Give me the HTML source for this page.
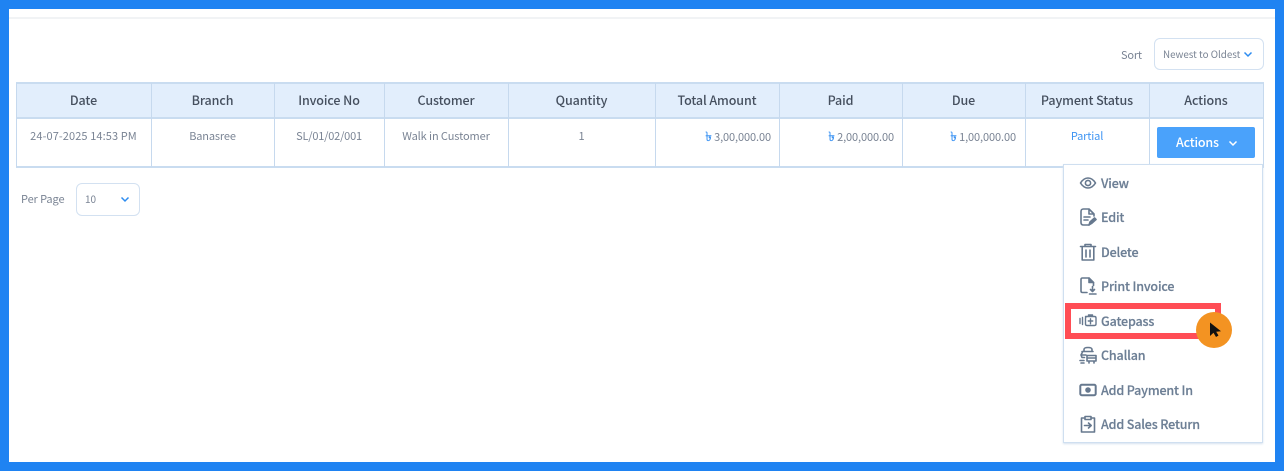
<!DOCTYPE html>
<html><head><meta charset="utf-8">
<style>
html,body{margin:0;padding:0;background:#fff}
body{width:1284px;height:471px;position:relative;overflow:hidden;font-family:"Noto Sans CJK KR","Liberation Sans",sans-serif;}
#w{position:absolute;left:0;top:0;width:1284px;height:471px;filter:blur(.3px)}
.a{position:absolute;white-space:nowrap}
.frame{position:absolute;left:0;top:0;width:1284px;height:471px;box-sizing:border-box;border:solid #1f83f2;border-width:9px 9px 9px 9px;z-index:20;pointer-events:none}
.h{position:absolute;top:82px;height:35px;line-height:36px;text-align:center;font-size:12.5px;letter-spacing:-.1px;font-weight:500;color:#454f5e}
.c{position:absolute;top:129px;line-height:14px;text-align:center;font-size:11px;letter-spacing:-.15px;color:#7a8494}
.r{text-align:right;letter-spacing:-.1px}
.v{position:absolute;width:1px;top:83px;height:84px;background:#c6d9ee}
.t{color:#3f95f3;font-size:13px;font-weight:500;line-height:14px;-webkit-text-stroke:.3px #3f95f3}
.mi{position:absolute;left:1101px;font-size:12.5px;letter-spacing:-.15px;font-weight:500;color:#6d7f95;line-height:18px;white-space:nowrap;-webkit-text-stroke:.2px #6d7f95}
.ic{position:absolute;left:1079px;width:18px;height:18px;fill:none;stroke:#66788e;stroke-width:1.6;stroke-linejoin:round;stroke-linecap:round}
</style></head><body>
<div class="frame"></div>
<div id="w">
<div class="a" style="left:9px;top:17px;width:1266px;height:2px;background:#f1f3f5"></div>

<div class="a" style="left:1121px;top:47px;font-size:11px;letter-spacing:-.2px;line-height:16px;color:#7a8494">Sort</div>
<div class="a" style="left:1154px;top:38px;width:110px;height:32px;box-sizing:border-box;border:1px solid #d3e1f1;border-radius:6px"></div>
<div class="a" style="left:1163px;top:47px;font-size:9.8px;line-height:14px;color:#7a8494">Newest to Oldest</div>
<svg class="a" style="left:1243px;top:51px" width="10" height="7"><path d="M1.5 1.5L5 5L8.5 1.5" fill="none" stroke="#2d8cf0" stroke-width="1.5"/></svg>

<div class="a" style="left:16px;top:83px;width:1248px;height:35px;background:#e2eefc"></div>
<div class="a" style="left:16px;top:82px;width:1248px;height:2px;background:#c9dcf0"></div>
<div class="a" style="left:16px;top:117px;width:1248px;height:2px;background:#c9dcf0"></div>
<div class="a" style="left:16px;top:166px;width:1248px;height:2px;background:#c9dcf0"></div>
<div class="v" style="left:16px"></div><div class="v" style="left:151px"></div><div class="v" style="left:274px"></div><div class="v" style="left:384px"></div><div class="v" style="left:508px"></div><div class="v" style="left:655px"></div><div class="v" style="left:779px"></div><div class="v" style="left:902px"></div><div class="v" style="left:1025px"></div><div class="v" style="left:1149px"></div><div class="v" style="left:1263px"></div>

<div class="h" style="left:16px;width:135px">Date</div>
<div class="h" style="left:151px;width:123px">Branch</div>
<div class="h" style="left:274px;width:110px">Invoice No</div>
<div class="h" style="left:384px;width:124px">Customer</div>
<div class="h" style="left:508px;width:147px">Quantity</div>
<div class="h" style="left:655px;width:124px">Total Amount</div>
<div class="h" style="left:779px;width:123px">Paid</div>
<div class="h" style="left:902px;width:123px">Due</div>
<div class="h" style="left:1025px;width:124px">Payment Status</div>
<div class="h" style="left:1149px;width:114px">Actions</div>

<div class="c" style="left:16px;width:135px;letter-spacing:.1px">24-07-2025 14:53 PM</div>
<div class="c" style="left:151px;width:123px">Banasree</div>
<div class="c" style="left:274px;width:110px;letter-spacing:-.2px">SL/01/02/001</div>
<div class="c" style="left:384px;width:124px;letter-spacing:-.1px">Walk in Customer</div>
<div class="c" style="left:508px;width:147px">1</div>
<div class="c r" style="left:655px;width:116px"><span class="t">৳</span> 3,00,000.00</div>
<div class="c r" style="left:779px;width:115px"><span class="t">৳</span> 2,00,000.00</div>
<div class="c r" style="left:902px;width:114px"><span class="t">৳</span> 1,00,000.00</div>
<div class="c" style="left:1025px;width:124px;color:#3f95f3">Partial</div>

<div class="a" style="left:1157px;top:127px;width:98px;height:31px;background:#4aa2fb;border-radius:2px"></div>
<div class="a" style="left:1176px;top:133px;font-size:12.5px;letter-spacing:-.2px;font-weight:500;line-height:18px;color:#fff">Actions</div>
<svg class="a" style="left:1228px;top:140px" width="10" height="7"><path d="M1.5 1.5L5 5L8.5 1.5" fill="none" stroke="#fff" stroke-width="1.5"/></svg>

<div class="a" style="left:21px;top:192px;font-size:11px;letter-spacing:-.1px;line-height:15px;color:#7a8494">Per Page</div>
<div class="a" style="left:76px;top:183px;width:64px;height:33px;box-sizing:border-box;border:1px solid #d3e1f1;border-radius:6px"></div>
<div class="a" style="left:85px;top:192px;font-size:10px;line-height:14px;color:#7a8494">10</div>
<svg class="a" style="left:120px;top:196px" width="10" height="7"><path d="M1.5 1.5L5 5L8.5 1.5" fill="none" stroke="#2d8cf0" stroke-width="1.5"/></svg>

<div class="a" style="left:1063px;top:164px;width:200px;height:279px;box-sizing:border-box;background:#fff;border:1px solid #cfdff0;box-shadow:0 1px 2px #d5e1ee"></div>

<svg class="ic" style="top:174px" viewBox="0 0 18 18"><path d="M1.500 9C4 5 6.500 4 9 4s5 1 7.500 5c-2.500 4-5 5-7.500 5S4 13 1.500 9z"/><circle cx="9" cy="9" r="2.600"/></svg>
<div class="mi" style="top:174px">View</div>
<svg class="ic" style="top:208px" viewBox="0 0 18 18"><path d="M10 17H4.500Q2 17 2 14.500V3.500Q2 1 4.500 1H10l5 5v2M10 1v5h5M5 9h6M5 12h4"/><path d="M10 17l1-3 4.500-4 1.500 1.500-4.500 4z" fill="#66788e"/></svg>
<div class="mi" style="top:208px">Edit</div>
<svg class="ic" style="top:243px" viewBox="0 0 18 18"><path d="M1.500 3.500h15M6 3V1.500h6V3M3.200 4v13h11.600V4M7 7v7M11 7v7"/></svg>
<div class="mi" style="top:242.500px">Delete</div>
<svg class="ic" style="top:277px" viewBox="0 0 18 18"><path d="M8 15.500H3.500Q2 15.500 2 14V2.500Q2 1 3.500 1H10l4.500 4.500v3"/><path d="M10 1v4.500h4.500" fill="#66788e"/><path d="M13.500 9.500v5M11.500 12.500l2 2 2-2M10.500 17h6.500"/></svg>
<div class="mi" style="top:277px">Print Invoice</div>
<svg class="ic" style="top:312px;stroke-width:1.4" viewBox="0 0 18 18"><path d="M1 6.500v5M3.500 5.500v7M6.500 4.500h9q1.500 0 1.500 1.500v6q0 1.500-1.500 1.500h-7.500q-1.500 0-1.500-1.500v-6q0-1.500 1.500-1.500zM9.500 4.500V3h4v1.500M11.500 6.800v5M9.300 9h4.400"/></svg>
<div class="mi" style="top:311.500px">Gatepass</div>
<svg class="ic" style="top:346px" viewBox="0 0 18 18"><path d="M5 5V3.500Q5 1.500 9 1.500t4 2V5M3 5.500h11M3.500 6l-1.500 3h5M2 9l1 2.500h2.500M1 14.500h4M2 17h3"/><path d="M8 9.500h9v5.500H8zM8 12h9M10 15.500v1.500M15 15.500v1.500"/></svg>
<div class="mi" style="top:346px">Challan</div>
<svg class="ic" style="top:381px" viewBox="0 0 18 18"><rect x="1.300" y="3.800" width="15.400" height="10.400" rx="1.500" stroke-width="2"/><circle cx="9" cy="9" r="2.800" fill="#66788e" stroke="none"/></svg>
<div class="mi" style="top:380.500px">Add Payment In</div>
<svg class="ic" style="top:415px" viewBox="0 0 18 18"><path d="M6 3H2.500v14h13V3H12M6 1.500h6v3H6zM5.500 10.500h6.500M9.500 8l2.700 2.500-2.700 2.500"/></svg>
<div class="mi" style="top:415px">Add Sales Return</div>

<div class="a" style="left:1065px;top:303px;width:156px;height:36px;box-sizing:border-box;border:6px solid #ff4d55"></div>
<div class="a" style="left:1195.500px;top:312px;width:36px;height:36px;border-radius:50%;background:#f39322"></div>
<svg class="a" style="left:1209px;top:322px" width="14" height="16"><path d="M1 0.500L1 14L4.500 10.800L7 15L9.500 13.500L7.200 9.800L12 9.300z" fill="#111"/></svg>
</div>
</body></html>
